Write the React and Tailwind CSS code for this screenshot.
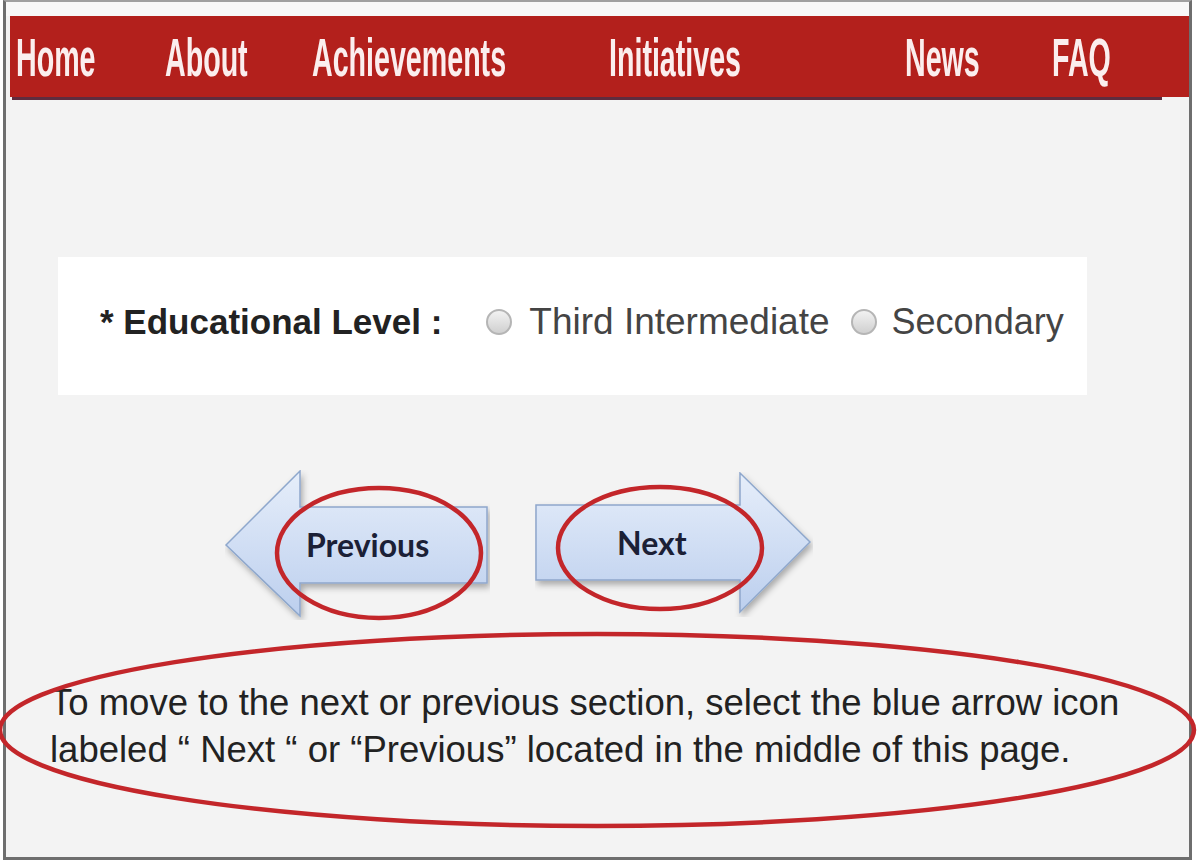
const navItems = [
  { label: 'Home', w: 'w-[79px]', ml: 'ml-[6px]' },
  { label: 'About', w: 'w-[82px]', ml: 'ml-[70px]' },
  { label: 'Achievements', w: 'w-[197px]', ml: 'ml-[65px]' },
  { label: 'Initiatives', w: 'w-[140px]', ml: 'ml-[100px]' },
  { label: 'News', w: 'w-[74px]', ml: 'ml-[156px]' },
  { label: 'FAQ', w: 'w-[59px]', ml: 'ml-[73px]' },
];

const Radio = () => (
  <span className="block w-[26px] h-[26px] rounded-full border-2 border-[#b5b5b5] bg-gradient-to-b from-[#f2f2f2] to-[#d0d0d0] shrink-0" />
);

const ArrowDefs = () => (
  <defs>
    <linearGradient id="arrowFill" x1="0" y1="0" x2="0" y2="1">
      <stop offset="0%" stopColor="#e6eefa" />
      <stop offset="100%" stopColor="#bccfee" />
    </linearGradient>
    <filter id="arrowShadow" x="-10%" y="-10%" width="130%" height="140%">
      <feDropShadow dx="2" dy="4" stdDeviation="3" floodColor="#000" floodOpacity="0.3" />
    </filter>
  </defs>
);

const PrevArrow = () => (
  <div className="relative w-[265px] h-[150px]">
    <svg width="265" height="150" viewBox="0 0 265 150" className="absolute left-0 top-0">
      <ArrowDefs />
      <path d="M1 75 L75 1 L75 37 L262 37 L262 113 L75 113 L75 146 Z" fill="url(#arrowFill)" stroke="#8ea7cc" strokeWidth="1.5" filter="url(#arrowShadow)" />
    </svg>
    <span className="absolute left-[81px] top-[59px] text-[32px] leading-none font-bold text-[#1b2036] font-['Lato',sans-serif]">
      Previous
    </span>
  </div>
);

const NextArrow = () => (
  <div className="relative w-[278px] h-[145px] mt-[2px]">
    <svg width="278" height="145" viewBox="0 0 278 145" className="absolute left-0 top-0">
      <ArrowDefs />
      <path d="M1 33 L205 33 L205 1 L275 70 L205 140 L205 108 L1 108 Z" fill="url(#arrowFill)" stroke="#8ea7cc" strokeWidth="1.5" filter="url(#arrowShadow)" />
    </svg>
    <span className="absolute left-[82px] top-[55px] text-[32px] leading-none font-bold text-[#1b2036] font-['Lato',sans-serif]">
      Next
    </span>
  </div>
);

export default function App() {
  return (
    <div className="relative w-[1198px] h-[864px] bg-white overflow-hidden font-['Liberation_Sans',Arial,sans-serif]">
      <div className="ml-[3px] w-[1189px] h-[860px] border-l-[3px] border-r-[3px] border-b-[3px] border-t-[2px] border-[#6e6e6e] border-t-[#a0a0a0] bg-[#f3f3f3]">
        <div className="h-[14px] bg-[#f8f8f8]" />

        {/* Nav */}
        <div className="ml-[4px] h-[81px] bg-[#b3201c] flex items-center">
          {navItems.map(item => (
            <div key={item.label} className={`${item.w} ${item.ml} shrink-0 h-[60px] flex items-center`}>
              <span className="inline-block whitespace-nowrap origin-left scale-x-[0.53] text-[54px] font-bold leading-none text-[#fbeeee] font-['Liberation_Sans',Arial,sans-serif]">
                {item.label}
              </span>
            </div>
          ))}
        </div>
        <div className="ml-[6px] w-[1150px] h-[3px] bg-[#5e2c3e]" />

        {/* Form row */}
        <div className="mt-[157px] ml-[52px] w-[1029px] h-[138px] bg-white flex items-center pl-[42px] pb-[8px]">
          <span className="text-[35px] font-bold text-[#222] whitespace-nowrap">* Educational Level :</span>
          <span className="ml-[44px]"><Radio /></span>
          <span className="ml-[17px] text-[37px] text-[#444] whitespace-nowrap">Third Intermediate</span>
          <span className="ml-[21px]"><Radio /></span>
          <span className="ml-[15px] text-[36px] text-[#444] whitespace-nowrap">Secondary</span>
        </div>

        {/* Arrows */}
        <div className="mt-[75px] ml-[219px] flex items-start">
          <PrevArrow />
          <div className="ml-[45px]">
            <NextArrow />
          </div>
        </div>

        {/* Instruction */}
        <p className="mt-[59px] ml-[44px] text-[36.5px] leading-[47px] text-[#222] whitespace-nowrap">
          To move to the next or previous section, select the blue arrow icon
          <br />
          labeled “ Next “ or “Previous” located in the middle of this page.
        </p>
      </div>

      {/* Red annotation ellipses */}
      <svg width="1198" height="864" className="absolute left-0 top-0 pointer-events-none">
        <ellipse cx="379" cy="553" rx="102" ry="65" fill="none" stroke="#c3262a" strokeWidth="4.5" />
        <ellipse cx="660" cy="548" rx="102" ry="61" fill="none" stroke="#c3262a" strokeWidth="4.5" />
        <ellipse cx="597" cy="730" rx="597" ry="96" fill="none" stroke="#c3262a" strokeWidth="4.5" />
      </svg>
    </div>
  );
}
